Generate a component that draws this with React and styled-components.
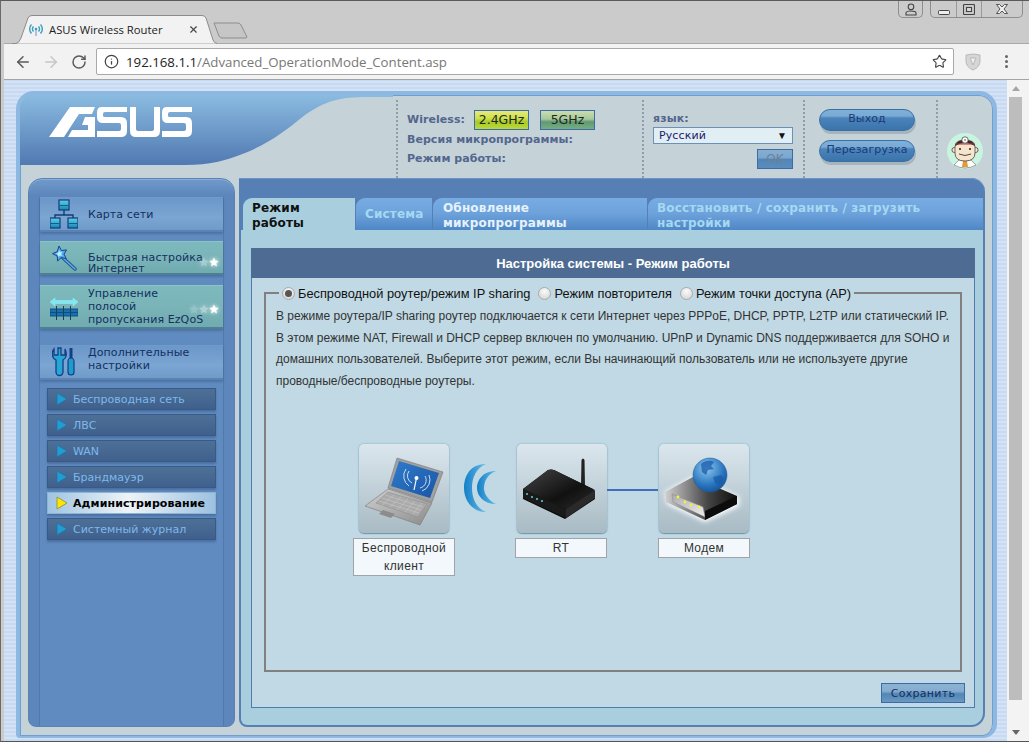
import React from "react";
import styled, { createGlobalStyle } from "styled-components";
import { ArrowLeft, ArrowRight, RotateCw, Info, Star, X } from "lucide-react";

const Global = createGlobalStyle`
  html, body { margin: 0; padding: 0; overflow: hidden; background: #ccc; }
  * { box-sizing: border-box; }
`;
const UI = `"Open Sans", "Noto Sans", sans-serif`;
const VERDANA = `"DejaVu Sans", Verdana, sans-serif`;
const ARIAL = `"Liberation Sans", Arial, sans-serif`;

const Win = styled.div`
  width: 1029px; height: 742px; background: #cbcbcb; display: flex; flex-direction: column;
  border-top: 1px solid #5a5a5a; border-left: 1px solid #6a6a6a; border-bottom: 1px solid #555; overflow: hidden;
`;
const TitleBar = styled.div`position: relative; z-index: 2; height: 42px; display: flex; align-items: flex-start; padding-left: 11px; flex: none;`;
const TabShape = styled.div`
  position: relative; width: 205px; height: 29px; margin-top: 14px; display: flex; align-items: center;
  padding: 0 0 0 17px; font: 11.3px ${UI}; color: #222; flex: none;
  & > svg.shape { position: absolute; left: 0; top: 0; z-index: 0; }
  & > *:not(.shape) { position: relative; z-index: 1; }
`;
const TabTitle = styled.span`margin-left: 6px; width: 139px; white-space: nowrap;`;
const NewTab = styled.svg`margin: 21px 0 0 -4px; flex: none;`;
const Controls = styled.div`margin-left: auto; display: flex; align-items: flex-start; padding-right: 6px;`;
const CtrlGroup = styled.div`
  height: 17px; display: flex; border: 1px solid #8d8d8d; border-top: none; border-radius: 0 0 5px 5px;
  margin-left: ${p => p.$gap || 0}px;
`;
const Ctrl = styled.div`
  width: ${p => p.$w}px; display: flex; align-items: center; justify-content: center;
  & + & { border-left: 1px solid #9a9a9a; }
`;
const Toolbar = styled.div`
  height: 37px; flex: none; margin-left: 3px; background: #f2f2f2; border-top: 1px solid #a8a8a8; border-bottom: 1px solid #a4a4a4;
  display: flex; align-items: center; padding-left: 5px; color: #5f5f5f;
`;
const NavBtn = styled.div`width: 28px; display: flex; justify-content: center; color: ${p => p.$off ? "#c6c6c6" : "#5a5a5a"};`;
const Omni = styled.div`
  width: 858px; height: 27px; margin-left: 3px; background: #fff; border: 1px solid #a9a9a9; border-radius: 2px;
  display: flex; align-items: center; padding: 0 6px 0 7px;
`;
const Url = styled.div`margin-left: 7px; flex: 1; font: 13.25px ${UI}; color: #777; white-space: nowrap;`;
const Host = styled.span`color: #222;`;
const ToolIcons = styled.div`display: flex; align-items: center; margin-left: 11px;`;
const Dots = styled.div`
  margin-left: 24px; display: flex; flex-direction: column; gap: 2px;
  & > i { width: 3px; height: 3px; background: #666; border-radius: 50%; display: block; }
`;
const PageRow = styled.div`flex: 1; display: flex; margin-left: 3px; min-height: 0;`;
const Viewport = styled.div`
  width: 1003px; flex: none; padding: 11px 10px 0 12px;
  background: repeating-linear-gradient(0deg, #c8daf1 0 2px, #d3e2f5 2px 4px);
`;
const Scrollbar = styled.div`
  flex: 1; background: #f3f3f3; display: flex; flex-direction: column; align-items: flex-start; padding-left: 2px;
`;
const Arrow = styled.div`
  width: 13px; height: 17px; display: flex; align-items: center; justify-content: center; flex: none;
  &::before { content: ""; border-left: 4px solid transparent; border-right: 4px solid transparent;
    ${p => p.$down ? "border-top: 5px solid #666;" : "border-bottom: 5px solid #a5a5a5;"} }
`;
const Thumb = styled.div`width: 13px; height: 603px; background: #bdbdbd; flex: none;`;
const Track = styled.div`flex: 1;`;

const Frame = styled.div`
  width: 981px; height: 647px; border: 4px solid #8db8e2; border-bottom-width: 2px; border-radius: 18px 18px 14px 4px;
  background: #c5d2d8; display: flex; flex-direction: column; overflow: hidden; box-shadow: inset 0 0 0 1px #6f9fd0;
`;
const Head = styled.div`position: relative; height: 83px; display: flex; flex: none;`;
const Curve = styled.svg`position: absolute; left: 0; top: 0;`;
const LogoCell = styled.div`position: relative; width: 376px; padding: 11px 0 0 29px; flex: none;`;
const Cell = styled.div`
  position: relative; width: ${p => p.$w}px; margin-top: 5px; border-left: 2px dotted #8d9ea8; flex: none;
  padding: ${p => p.$pad};
`;
const StatusRow = styled.div`
  display: flex; align-items: center; height: ${p => p.$h || 19}px; font: bold 11px ${VERDANA}; color: #53668e; letter-spacing: .05px;
`;
const Badge = styled.div`
  height: 20px; width: ${p => p.$w}px; margin-left: ${p => p.$ml}px; border: 1px solid #3d6ba5;
  font: 12.5px ${VERDANA}; color: #1f2a1c; letter-spacing: 0; display: flex; align-items: center; justify-content: center;
  background: ${p => p.$g};
`;
const Lang = styled.div`font: bold 11px ${VERDANA}; color: #53668e; letter-spacing: .1px; line-height: 13px; margin-bottom: 2px;`;
const Sel = styled.div`
  width: 140px; height: 17px; background: #e1eff5; border: 1px solid #6c90b8; display: flex; align-items: center;
  padding: 0 5px; font: 11px ${VERDANA}; color: #1b1b6a; letter-spacing: .1px; justify-content: space-between;
  & > b { font: 10px ${ARIAL}; color: #111; }
`;
const OkBtn = styled.div`
  width: 36px; height: 20px; margin: 5px 0 0 104px; border: 1px solid #3d6ba5; color: #6f8195; font: 12px ${VERDANA};
  display: flex; align-items: center; justify-content: center;
  background: linear-gradient(#86aed2 0, #7ba6cd 45%, #5285b8 50%, #5b8cbc 100%);
`;
const Pill = styled.div`
  width: 96px; height: 22px; border-radius: 11px; border: 1px solid #3b6fa3; margin-bottom: ${p => p.$mb || 0}px;
  background: linear-gradient(#7fb0d8 0, #78aad5 30%, #4a84ba 40%, #3a74ab 100%);
  box-shadow: 1px 3px 0 #a6b5bd; color: #1d3a78; font: 11px ${VERDANA}; letter-spacing: .1px;
  display: flex; align-items: center; justify-content: center; padding-bottom: 3px;
`;
const AvatarCell = styled.div`flex: 1; display: flex; padding: 33px 0 0 9px;`;

const Body = styled.div`flex: 1; display: flex; gap: 4px; padding: 0 8px 9px; min-height: 0;`;
const Side = styled.div`
  width: 207px; flex: none; border-radius: 14px 14px 8px 8px; border: 1px solid #5a83b4; padding: 18px 10px 0;
  background: linear-gradient(#7199cb 0, #5d87bc 16px, #5d87bc 100%);
  box-shadow: inset 0 1px 0 #8ab0da;
`;
const SideCol = styled.div`height: 100%; display: flex; flex-direction: column; border-left: 1px solid #5179ab; border-right: 1px solid #5179ab; background: #5f8bc1;`;
const MenuItem = styled.div`
  position: relative; height: ${p => p.$h}px; margin-top: ${p => p.$mt || 0}px; display: flex; align-items: center; flex: none;
  background: ${p => p.$teal ? "linear-gradient(#7db9bc 0,#7ab4b8 50%,#70abb0 100%)" : "linear-gradient(#6b97c9 0,#7ba5d2 60%,#6f9bca 100%)"};
  border-top: 1px solid ${p => p.$teal ? "#8dc4c4" : "#6f9bcc"}; border-bottom: 2px solid ${p => p.$teal ? "#4f7f94" : "#5a82b3"};
  box-shadow: 0 2px 2px rgba(50,80,120,.4); 
`;
const MenuIcon = styled.div`width: 48px; flex: none; display: flex; justify-content: center; padding-top: ${p => p.$pt || 0}px;`;
const MenuLabel = styled.div`
  font: 11px/${p => p.$lh || 13}px ${VERDANA}; color: #14305f; letter-spacing: .1px;
  padding-top: ${p => p.$pt || 0}px; padding-bottom: ${p => p.$pb || 0}px;
`;
const Stars = styled.div`position: absolute; right: 4px; top: ${p => p.$top}px; display: flex; gap: 0; color: #fff;`;
const SubList = styled.div`display: flex; flex-direction: column; gap: 4px; padding: 8px 7px 0;`;
const SubItem = styled.div`
  height: 22px; display: flex; align-items: center; padding-left: 8px; gap: 5px;
  border: 1px solid ${p => p.$on ? "#8fb3d3" : "#3a5a86"};
  font: ${p => p.$on ? "bold" : "normal"} 11px ${VERDANA}; letter-spacing: ${p => p.$on ? ".1px" : "0"};
  color: ${p => p.$on ? "#000" : "#7fb8ee"};
  background: ${p => p.$on ? "linear-gradient(90deg,#9fc4e2 0,#eef3f7 48%,#9cc1e0 100%)" : "linear-gradient(#4d7099 0,#466891 50%,#3f608c 100%)"};
  box-shadow: 0 2px 2px rgba(50,80,120,.45);
`;
const Tri = styled.svg`flex: none;`;

const Main = styled.div`
  width: 746px; flex: none; display: flex; flex-direction: column; padding: 20px 2px 2px; border-radius: 0 14px 14px 8px;
  background: #557fb5;
  box-shadow: inset 0 1px 0 #6c94c6;
`;
const Tabs = styled.div`display: flex; height: 32px; padding-left: 2px; gap: 1px; flex: none; overflow: hidden;`;
const TabBtn = styled.div`
  width: ${p => p.$w}px; height: 32px; padding: ${p => p.$pad || "3px 0 0 9px"}; overflow: hidden; border-radius: 9px 0 0 0; flex: none;
  font: bold 12px/15px ${VERDANA}; letter-spacing: .15px;
  color: ${p => p.$on ? "#111" : p.$dim ? "#a6d8f2" : "#e6f2fb"};
  background: ${p => p.$on ? "#a9cfdf" : "linear-gradient(#78ace3 0,#6ca1da 50%,#4f87c6 100%)"};
`;
const Content = styled.div`
  flex: 1; background: #a9cfdf; padding: 18px 8px 17px 10px; border-radius: 0 0 12px 6px; display: flex; flex-direction: column; min-height: 0;
`;
const SectionTitle = styled.div`
  height: 30px; flex: none; background: #4e6c93; color: #fff; font: bold 13px ${ARIAL}; display: flex; align-items: center; justify-content: center;
`;
const Panel = styled.div`
  flex: 1; background: #c0d9e4; border: 1px solid #4f7bb0; border-top: none; padding: 7px 12px 0 12px; display: flex; flex-direction: column;
`;
const Field = styled.fieldset`
  margin: 0; padding: 0 0 0 10px; height: 387px; border: 2px solid #808080; font: 12px ${ARIAL}; color: #333;
`;
const Legend = styled.legend`
  margin-left: 3px; padding: 0 3px 0 3px; display: flex; align-items: center; height: 16px; color: #111; font: 12.8px ${ARIAL}; white-space: nowrap;
`;
const Radio = styled.span`
  width: 13px; height: 13px; border-radius: 50%; border: 1px solid #aaa; margin: 0 3px 0 ${p => p.$ml || 0}px; flex: none;
  display: flex; align-items: center; justify-content: center;
  background: radial-gradient(circle at 50% 30%, #fbfbfb, #d0d0d0);
  &::after { content: ""; width: 7px; height: 7px; border-radius: 50%; background: ${p => p.$on ? "#555" : "transparent"}; }
`;
const Para = styled.p`margin: 0; padding-top: 5px; font: 12px/21.6px ${ARIAL}; color: #333; white-space: nowrap;`;
const Diagram = styled.div`display: flex; align-items: flex-start; margin: 52px 0 0 77px;`;
const Node = styled.div`width: ${p => p.$w}px; display: flex; flex-direction: column; align-items: center; flex: none;`;
const Tile = styled.div`
  width: 90px; height: 89px; border-radius: 5px; background: linear-gradient(#dbe7ed 0, #a8bac4 100%);
  box-shadow: 0 0 2px rgba(110,150,175,.8), 0 1px 1px rgba(90,120,140,.7); margin-left: ${p => p.$shift || 0}px;
`;
const NodeLabel = styled.div`
  width: 100%; margin-top: 5px; background: #f2f8fb; border: 1px solid #a0a4a8; text-align: center; font: 12px/18px ${ARIAL}; color: #333; letter-spacing: .35px;
`;
const Wave = styled.svg`margin: 20px 18px 0 9px; flex: none;`;
const Link = styled.div`width: 51px; height: 2px; margin-top: 45px; background: #3f6fb8; flex: none;`;
const SaveRow = styled.div`display: flex; justify-content: flex-end; padding-top: 11px; margin-right: -3px;`;
const SaveBtn = styled.div`
  width: 84px; height: 20px; border: 1px solid #3d6ba5; color: #14305f; font: 11px ${VERDANA}; letter-spacing: .3px;
  display: flex; align-items: center; justify-content: center;
  background: linear-gradient(#8bb1d2 0, #86add0 40%, #5286b6 55%, #6a99c2 100%);
`;

const WifiFav = () => (
  <svg width="14" height="14" viewBox="0 0 14 14" fill="none" stroke="#3aa0bf" strokeWidth="1.4">
    <circle cx="7" cy="6" r="1.3" fill="#3aa0bf" stroke="none" /><path d="M7 7v6" stroke="#9ac" />
    <path d="M4.5 3.5a3.5 3.5 0 0 0 0 5M9.5 3.5a3.5 3.5 0 0 1 0 5M2.5 1.5a6.5 6.5 0 0 0 0 9M11.5 1.5a6.5 6.5 0 0 1 0 9" />
  </svg>
);
const S_PATH = "M4 1 H30 V6 H8 Q6 6 6 8 V10 Q6 11 8 11 H24 Q30 11 30 17 V25 Q30 31 24 31 H0 V25 H22 Q24 25 24 23 V19 Q24 17 22 17 H6 Q0 17 0 11 V7 Q0 1 4 1Z";
const Logo = () => (
  <svg width="143" height="31" viewBox="0 0 143 31" fill="#fff" style={{display:"block"}}>
    <path d="M0 31 L21 1 H46 L43 8 H30 L15 31Z" />
    <path d="M36 11 H46 V31 H19 L23 24 H39 V19 H33Z" />
    <path d={S_PATH} transform="translate(48 0)" />
    <path d="M81 1 H87 V23 Q87 25 89 25 H103 Q105 25 105 23 V1 H111 V25 Q111 31 105 31 H87 Q81 31 81 25Z" />
    <path d={S_PATH} transform="translate(113 0)" />
  </svg>
);
const Avatar = () => (
  <svg width="36" height="36" viewBox="0 0 36 36">
    <circle cx="18" cy="18" r="18" fill="#c9f4df" />
    <path d="M7 32 L12 27 H24 L29 32 Q18 38 7 32Z" fill="#fff" stroke="#555" strokeWidth=".5" />
    <path d="M16 28 H20 L21 34 H15Z" fill="#e59a3a" />
    <circle cx="7.500" cy="17" r="2.600" fill="#f6e4cc" stroke="#333" strokeWidth=".7" />
    <circle cx="28.500" cy="17" r="2.600" fill="#f6e4cc" stroke="#333" strokeWidth=".7" />
    <path d="M8 14 Q8 7 18 7 Q28 7 28 14 V20 Q28 28 18 28 Q8 28 8 20Z" fill="#f6e4cc" stroke="#333" strokeWidth=".7" />
    <path d="M8 13 Q9 7 18 7 Q27 7 28 13 Q23 10 18 10 Q13 10 8 13Z" fill="#3a2a2a" />
    <path d="M8.500 11 L27.500 11" stroke="#b0323a" strokeWidth="1.200" />
    <circle cx="18" cy="7" r="3.200" fill="#fff" stroke="#333" strokeWidth=".7" />
    <circle cx="18" cy="7" r="1.100" fill="#999" />
    <circle cx="13" cy="16" r="1" fill="#222" /><circle cx="23" cy="16" r="1" fill="#222" />
    <path d="M12 21 Q18 24 24 21" stroke="#333" strokeWidth=".9" fill="none" />
  </svg>
);
const NetMap = () => (
  <svg width="28" height="30" viewBox="0 0 28 30">
    <defs><linearGradient id="nm" x1="0" y1="0" x2="0" y2="1"><stop offset="0" stopColor="#5fd0e6"/><stop offset="1" stopColor="#1487b5"/></linearGradient></defs>
    <path d="M14 10V16M5 23V16H23V23" fill="none" stroke="#123d7a" strokeWidth="1.4" />
    {[[9,1],[0,19],[18,19]].map(([x,y],i)=>(<g key={i}><rect x={x} y={y} width="10" height="10" fill="url(#nm)" stroke="#123d7a" strokeWidth="1.2"/><rect x={x+1} y={y+5} width="8" height="1" fill="#0b5f8e"/></g>))}
  </svg>
);
const Wand = () => (
  <svg width="26" height="26" viewBox="0 0 26 26">
    <path d="M11 12L24 24" stroke="#1d4f92" strokeWidth="3.4" strokeLinecap="round" />
    <path d="M11 12L24 24" stroke="#5fb2de" strokeWidth="1.6" strokeLinecap="round" />
    <path d="M8 1l2.5 4.5 5-.6-2.5 4.2 2.2 4.6-5-1.2-3.6 3.5-.4-5L1.5 8.6 6.2 6.8Z" fill="#4ab1e6" stroke="#1d3f92" strokeWidth="1" />
    <path d="M8 5l1 2 2.4-.2-1.2 2 1 2.2-2.3-.5-1.7 1.6-.2-2.3L5 8.6l2.2-.9Z" fill="#bfeaff" />
  </svg>
);
const QosIcon = () => (
  <svg width="28" height="26" viewBox="0 0 28 26">
    <path d="M0 5l5-4v2.5h18V1l5 4-5 4V6.500H5V9Z" fill="#7fe8f2" stroke="#9af0f5" strokeWidth=".5" />
    <rect x="0" y="12" width="28" height="7" fill="#1772ab" stroke="#154f8a" />
    <rect x="0" y="15" width="28" height="1" fill="#0d4f85" />
    {[6,13,20].map(x => <rect key={x} x={x} y="9" width="1" height="14" fill="#164060" />)}
  </svg>
);
const Tools = () => (
  <svg width="24" height="30" viewBox="0 0 24 30" fill="none">
    <path d="M2 2C-1 6 0 11 4 13V25a3.500 3.500 0 0 0 7 0V13C15 11 15 6 13 2V8H9V1H6V8H2Z" fill="#26a6d5" stroke="#123f85" strokeWidth="1.3" />
    <path d="M19 1V11" stroke="#123f85" strokeWidth="3" />
    <path d="M19 11c-2.500 0-3 1-3 4v10c0 4 6 4 6 0V15c0-3-.5-4-3-4Z" fill="#1e9bcc" stroke="#123f85" strokeWidth="1.200" />
  </svg>
);
const Triangle = ({ on }) => (
  <Tri width="12" height="14" viewBox="0 0 12 14">
    <path d="M1 1 L11 7 L1 13Z" fill={on ? "#ffe600" : "#1f9ed2"} stroke={on ? "#8a8a40" : "#2a6ea8"} strokeWidth=".8" />
  </Tri>
);
const MiniStar = ({ o = 1 }) => (
  <svg width="10" height="10" viewBox="0 0 24 24" fill="#fff" opacity={o} style={{filter:"drop-shadow(0 0 2px #fff)"}}>
    <path d="M12 1l3.400 7.300 7.900 1-5.800 5.500 1.500 8L12 18.800 4.900 22.800l1.500-8L.7 9.300l7.900-1Z" />
  </svg>
);
const Laptop = () => (
  <svg width="90" height="89" viewBox="0 0 90 89">
    <defs>
      <linearGradient id="scr" x1="0" y1="0" x2="1" y2="1"><stop offset="0" stopColor="#2f7ccb"/><stop offset="1" stopColor="#1a55a5"/></linearGradient>
      <linearGradient id="lapb" x1="0" y1="0" x2="1" y2="1"><stop offset="0" stopColor="#d0d0d0"/><stop offset="1" stopColor="#8c8c8c"/></linearGradient>
    </defs>
    <path d="M38 14 L84 28 L73 58 L29 44Z" fill="#a0a0a0" stroke="#777" strokeWidth=".6"/>
    <path d="M40 17 L80 29 L71 54 L32 42Z" fill="url(#scr)"/>
    <g fill="none" stroke="#dbe9fa" strokeWidth="1" opacity=".9">
      <path d="M50 27a8 8 0 0 0 3 12M66 32a8 8 0 0 1-5 12M47 25a12 12 0 0 0 3 17M70 31a12 12 0 0 1-7 16"/>
    </g>
    <circle cx="57.500" cy="34" r="2" fill="#fff"/><path d="M57.500 34 L55 46" stroke="#fff" strokeWidth="1.200"/>
    <path d="M29 45 L73 59 L61 81 L6 62Z" fill="url(#lapb)" stroke="#777" strokeWidth=".6"/>
    <path d="M29 48 L68 60 L59 73 L17 59Z" fill="#aaa" stroke="#8c8c8c" strokeWidth=".5"/>
    <g stroke="#c8c8c8" strokeWidth=".6">
      <path d="M26 51 L64 63M23 54 L62 66M20 57 L60 69M35 51 L23 61M42 53 L31 63M49 55 L38 66M56 57 L46 68M63 59 L54 70"/>
    </g>
    <path d="M24 66 L36 70 L32 74 L20 70Z" fill="#8c8c8c"/>
  </svg>
);
const RouterPic = () => (
  <svg width="90" height="89" viewBox="0 0 90 89">
    <defs>
      <linearGradient id="rt" x1="0" y1="0" x2="1" y2="1"><stop offset="0" stopColor="#444"/><stop offset=".6" stopColor="#111"/><stop offset="1" stopColor="#2c2c2c"/></linearGradient>
    </defs>
    <path d="M64.500 16 Q66 13 67.500 16 L68 42 H64Z" fill="#222"/>
    <path d="M6 45 L31 26 Q34 25 37 26 L76 45 L78 55 L48 75 L6 55Z" fill="#0a0a0a"/>
    <path d="M6 45 L31 26 Q34 25 37 26 L78 46 L49 65 Z" fill="url(#rt)"/>
    <path d="M6 45 L49 65 L49 74 L6 54Z" fill="#1a1a1a"/>
    {[[10,50],[15,53],[20,55],[25,57]].map(([x,y])=><circle key={x} cx={x} cy={y} r="1.100" fill="#5cc6cc"/>)}
    <path d="M49 65 L78 46 L78 54 L49 74Z" fill="#2a2a2a"/>
  </svg>
);
const ModemPic = () => (
  <svg width="90" height="89" viewBox="0 0 90 89">
    <defs>
      <radialGradient id="gb" cx=".4" cy=".3" r=".8"><stop offset="0" stopColor="#8ec7ee"/><stop offset=".6" stopColor="#2c78c0"/><stop offset="1" stopColor="#0f4a92"/></radialGradient>
      <linearGradient id="md" x1="0" y1="0" x2="1" y2="0"><stop offset="0" stopColor="#d0d0d0"/><stop offset=".6" stopColor="#444"/><stop offset="1" stopColor="#0d0d0d"/></linearGradient>
      <linearGradient id="pn" x1="0" y1="0" x2="1" y2="1"><stop offset="0" stopColor="#aaa"/><stop offset="1" stopColor="#eee"/></linearGradient>
      <filter id="gl" x="-20%" y="-20%" width="140%" height="140%"><feGaussianBlur stdDeviation="2.500"/></filter>
    </defs>
    <path d="M6 48 L34 33 L80 53 L80 62 L46 78 L8 60Z" fill="#fff" filter="url(#gl)"/>
    <path d="M6 48 L34 33 L78 52 L78 60 L46 76 L7 58Z" fill="url(#md)"/>
    <path d="M13 50 L44 63 L46 73 L14 58Z" fill="url(#pn)" stroke="#888" strokeWidth=".5"/>
    <path d="M46 67 L78 52 L78 60 L46 76Z" fill="#0c0c0c"/>
    {[[19,53],[26,58],[32,61],[40,63]].map(([x,y])=><circle key={x} cx={x} cy={y} r="1.400" fill="#f7ef3a"/>)}
    <circle cx="51" cy="31" r="17" fill="url(#gb)" stroke="#1c5aa0" strokeWidth=".5"/>
    <path d="M42 20c4-4 10-4 13-2l-3 4 3 3-6 1-2 5-4-3ZM54 33l8-2 3 4-5 7-4-3Z" fill="#1a5ba8" opacity=".75"/>
  </svg>
);

const Menu = [
  ["Беспроводная сеть"], ["ЛВС"], ["WAN"], ["Брандмауэр"], ["Администрирование", true], ["Системный журнал"],
];

export default function App() {
  return (
    <Win>
      <Global />
      <TitleBar>
        <TabShape>
          <svg className="shape" width="205" height="29" viewBox="0 0 205 29">
            <path d="M0 28.500 H4 Q7 28 9 23 L16 3 Q17 .5 20 .5 H190 Q193 .5 194 3 L201 25 Q202 28 205 28.500" fill="#f2f2f2" stroke="#8c8c8c" />
          </svg>
          <WifiFav />
          <TabTitle>ASUS Wireless Router</TabTitle>
          <X size={11} strokeWidth={2.4} color="#444" />
        </TabShape>
        <NewTab width="36" height="17" viewBox="0 0 36 17">
          <path d="M1 1 H25 Q27 1 28 3 L34 15 Q34 16 32 16 H9 Q7 16 6 14Z" fill="#c6c6c6" stroke="#8d8d8d" />
        </NewTab>
        <Controls>
          <CtrlGroup>
            <Ctrl $w={23}>
              <svg width="12" height="13" viewBox="0 0 12 13" fill="none" stroke="#444" strokeWidth="1.100"><circle cx="6" cy="3.800" r="2.800"/><path d="M1 12 V10 Q1 8 6 8 Q11 8 11 10 V12Z"/></svg>
            </Ctrl>
          </CtrlGroup>
          <CtrlGroup $gap={7}>
            <Ctrl $w={25}><svg width="12" height="6" viewBox="0 0 12 6" style={{marginTop:8}}><rect x=".5" y=".5" width="11" height="4" rx="1" fill="#eee" stroke="#444"/></svg></Ctrl>
            <Ctrl $w={25}><svg width="12" height="11" viewBox="0 0 12 11" fill="none" stroke="#444" strokeWidth="1.100"><rect x=".5" y=".5" width="11" height="10" rx="1"/><rect x="3.500" y="3.500" width="5" height="4" fill="#ddd"/></svg></Ctrl>
            <Ctrl $w={41}><svg width="12" height="10" viewBox="0 0 12 10" fill="#eee" stroke="#444" strokeWidth=".9"><path d="M.5.500H3.500L6 3l2.500-2.500H11.500L8 5l3.500 4.500H8.500L6 7 3.500 9.500H.5L4 5Z"/></svg></Ctrl>
          </CtrlGroup>
        </Controls>
      </TitleBar>
      <Toolbar>
        <NavBtn><ArrowLeft size={18} strokeWidth={2} /></NavBtn>
        <NavBtn $off><ArrowRight size={18} strokeWidth={2} /></NavBtn>
        <NavBtn><RotateCw size={16} strokeWidth={2.2} /></NavBtn>
        <Omni>
          <Info size={15} strokeWidth={2} color="#444" />
          <Url><Host>192.168.1.1</Host>/Advanced_OperationMode_Content.asp</Url>
          <Star size={15} strokeWidth={1.8} color="#444" />
        </Omni>
        <ToolIcons>
          <svg width="16" height="18" viewBox="0 0 16 18" fill="#d6d6d6" stroke="#b9b9b9" strokeWidth="1"><path d="M1 2 Q8 0 15 2 V8 Q15 14 8 17 Q1 14 1 8Z"/><path d="M5 5 H11 L8 12Z" fill="#eee"/></svg>
          <Dots><i /><i /><i /></Dots>
        </ToolIcons>
      </Toolbar>
      <PageRow>
        <Viewport>
          <Frame>
            <Head>
              <Curve width="373" height="83" viewBox="0 0 373 83">
                <defs><linearGradient id="hd" x1="0" y1="0" x2="0" y2="1"><stop offset="0" stopColor="#8abbe0"/><stop offset="1" stopColor="#5179b2"/></linearGradient></defs>
                <path d="M0 0 H373 V2 H347 C320 2 305 6 285 20 C265 36 250 48 225 58 C205 66 190 70 165 70 H0Z" fill="url(#hd)" />
              </Curve>
              <LogoCell><Logo /></LogoCell>
              <Cell $w={246} $pad="9px 0 0 9px">
                <StatusRow $h={21}>Wireless:<Badge $w={55} $ml={9} $g="linear-gradient(#e4ea7a 0,#cfe04c 40%,#a6cb2a 60%,#bcd83a 100%)">2.4GHz</Badge><Badge $w={55} $ml={11} $g="linear-gradient(#c9ddb0 0,#a9c99a 45%,#5e9a74 60%,#78ad82 100%)">5GHz</Badge></StatusRow>
                <StatusRow>Версия микропрограммы:</StatusRow>
                <StatusRow>Режим работы:</StatusRow>
              </Cell>
              <Cell $w={161} $pad="12px 0 0 9px">
                <Lang>язык:</Lang>
                <Sel>Русский<b>▼</b></Sel>
                <OkBtn>OK</OkBtn>
              </Cell>
              <Cell $w={133} $pad="9px 0 0 14px">
                <Pill $mb={9}>Выход</Pill>
                <Pill>Перезагрузка</Pill>
              </Cell>
              <Cell $w={57} $pad="0"><AvatarCell><Avatar /></AvatarCell></Cell>
            </Head>
            <Body>
              <Side>
                <SideCol>
                  <MenuItem $h={35}><MenuIcon><NetMap /></MenuIcon><MenuLabel>Карта сети</MenuLabel></MenuItem>
                  <MenuItem $h={34} $mt={9} $teal><MenuIcon $pt={0}><Wand /></MenuIcon><MenuLabel $pt={10} $lh={11}>Быстрая настройка<br />Интернет</MenuLabel><Stars $top={15}><MiniStar o={.35} /><MiniStar /></Stars></MenuItem>
                  <MenuItem $h={44} $mt={10} $teal><MenuIcon $pt={6}><QosIcon /></MenuIcon><MenuLabel>Управление<br />полосой<br />пропускания EzQoS</MenuLabel><Stars $top={18}><MiniStar o={.2} /><MiniStar o={.4} /><MiniStar /></Stars></MenuItem>
                  <MenuItem $h={35} $mt={16}><MenuIcon><Tools /></MenuIcon><MenuLabel $pb={6}>Дополнительные<br />настройки</MenuLabel></MenuItem>
                  <SubList>
                    {Menu.map(([t, on]) => <SubItem key={t} $on={on}><Triangle on={on} />{t}</SubItem>)}
                  </SubList>
                </SideCol>
              </Side>
              <Main>
                <Tabs>
                  <TabBtn $w={112} $on>Режим<br />работы</TabBtn>
                  <TabBtn $w={76} $dim $pad="9px 0 0 9px">Система</TabBtn>
                  <TabBtn $w={214} $pad="3px 0 0 10px">Обновление<br />микропрограммы</TabBtn>
                  <TabBtn $w={335} $dim>Восстановить / сохранить / загрузить<br />настройки</TabBtn>
                </Tabs>
                <Content>
                  <SectionTitle>Настройка системы - Режим работы</SectionTitle>
                  <Panel>
                    <Field>
                      <Legend><Radio $on />Беспроводной роутер/режим IP sharing<Radio $ml={8} />Режим повторителя<Radio $ml={8} />Режим точки доступа (AP)</Legend>
                      <Para>
                        В режиме роутера/IP sharing роутер подключается к сети Интернет через PPPoE, DHCP, PPTP, L2TP или статический IP.<br />
                        В этом режиме NAT, Firewall и DHCP сервер включен по умолчанию. UPnP и Dynamic DNS поддерживается для SOHO и<br />
                        домашних пользователей. Выберите этот режим, если Вы начинающий пользователь или не используете другие<br />
                        проводные/беспроводные роутеры.
                      </Para>
                      <Diagram>
                        <Node $w={102}><Tile><Laptop /></Tile><NodeLabel>Беспроводной клиент</NodeLabel></Node>
                        <Wave width="33" height="48" viewBox="0 0 33 48">
                          <defs><linearGradient id="wv" x1="0" y1="0" x2="1" y2="0"><stop offset="0" stopColor="#137fc6"/><stop offset="1" stopColor="#67bde8"/></linearGradient></defs>
                          <path d="M22 0 C4 0 0 15 0 24 C0 36 8 48 22 48 C12 44 8 34 8 24 C8 14 12 4 22 0Z" fill="url(#wv)" />
                          <path d="M32 7 C18 7 13 17 13 24 C13 32 20 40 32 40 C24 36 20 30 20 24 C20 17 24 10 32 7Z" fill="url(#wv)" />
                        </Wave>
                        <Node $w={92}><Tile $shift={2}><RouterPic /></Tile><NodeLabel>RT</NodeLabel></Node>
                        <Link />
                        <Node $w={92}><Tile><ModemPic /></Tile><NodeLabel>Модем</NodeLabel></Node>
                      </Diagram>
                    </Field>
                    <SaveRow><SaveBtn>Сохранить</SaveBtn></SaveRow>
                  </Panel>
                </Content>
              </Main>
            </Body>
          </Frame>
        </Viewport>
        <Scrollbar>
          <Arrow />
          <Thumb />
          <Track />
          <Arrow $down />
        </Scrollbar>
      </PageRow>
    </Win>
  );
}
